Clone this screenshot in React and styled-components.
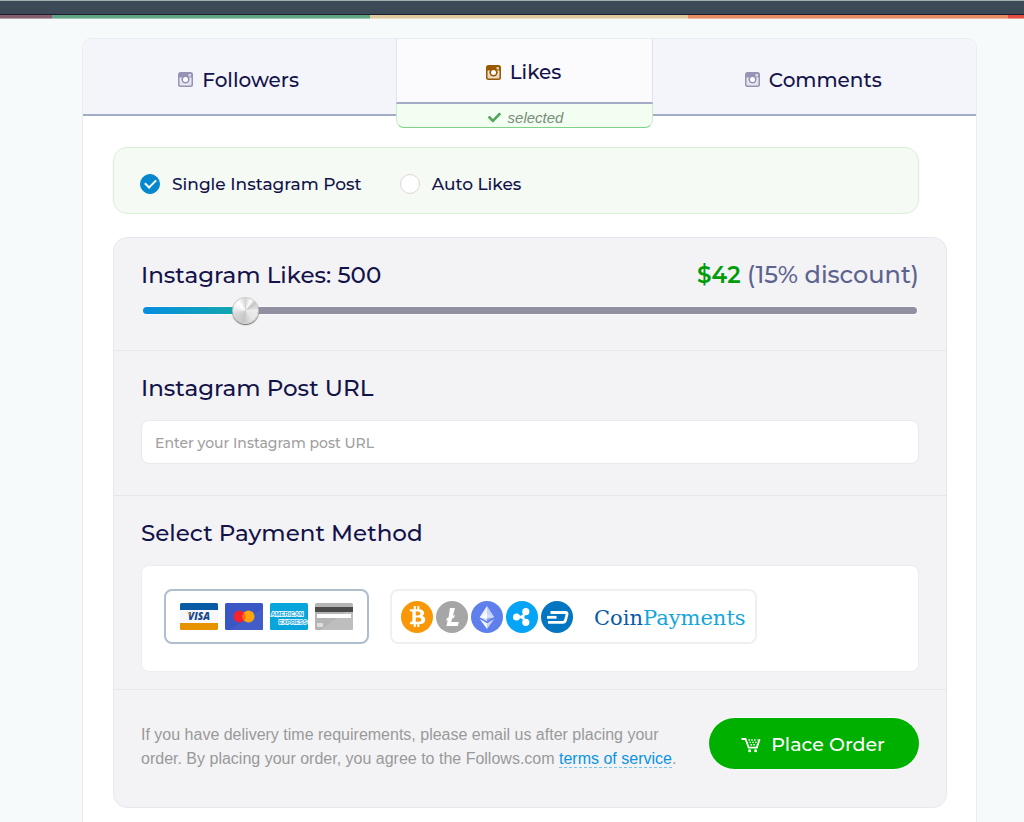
import React, { useState } from "react";
import styled, { createGlobalStyle } from "styled-components";
import { FaBtc, FaCheck } from "react-icons/fa";

const GlobalStyle = createGlobalStyle`
  * {
    box-sizing: border-box;
  }
  body {
    margin: 0;
    background: #f6fafb;
    color: #13134a;
    font-family: Montserrat, Inter, sans-serif;
    font-weight: 500;
  }
  button, input {
    font-family: inherit;
  }
`;

const Page = styled.div`
  display: flex;
  flex-direction: column;
  min-height: 100vh;
`;

const TopBar = styled.header`
  height: 15px;
  background: #3c4956;
  border-top: 1px solid #a3b0b0;
  border-bottom: 1px solid #1d1c2c;
`;

const Stripe = styled.div`
  display: grid;
  grid-template-columns: 52fr 318fr 318fr 320fr 16fr;
  height: 4px;
`;

const Band = styled.span`
  background: ${(props) => props.$color};
  border-bottom: 1px solid rgba(255, 255, 255, 0.4);
`;

const Card = styled.main`
  flex: 1;
  margin: 19px 47px 0 82px;
  border: 1px solid #e8edf2;
  border-bottom: 0;
  border-radius: 10px 10px 0 0;
  background: #fff;
`;

const Tabs = styled.nav`
  display: grid;
  grid-template-columns: 313fr 256fr 323fr;
  align-items: start;
`;

const TabCell = styled.div`
  display: flex;
  flex-direction: column;
`;

const Tab = styled.button`
  display: flex;
  align-items: center;
  justify-content: center;
  gap: 9px;
  height: ${(props) => (props.$active ? "65px" : "77px")};
  padding: ${(props) => (props.$active ? "3px 2px 0 0" : "6px 2px 0 0")};
  border: solid #dfe3ec;
  border-width: ${(props) => (props.$active ? "0 1px" : "0")};
  border-bottom: 2px solid #a3abc6;
  border-radius: ${(props) => props.$radius || "0"};
  background: ${(props) => (props.$active ? "#fbfbfd" : "#f4f5fa")};
  color: #13134a;
  font-size: 20px;
  font-weight: 500;
  cursor: pointer;

  svg {
    color: ${(props) => (props.$active ? "#985900" : "#9594b4")};
  }
`;

const Selected = styled.div`
  display: flex;
  align-items: center;
  justify-content: center;
  gap: 7px;
  height: 24px;
  padding: 3px 0 0 2px;
  border: 1px solid #cdeccd;
  border-top: 0;
  border-bottom-color: #7fd386;
  border-radius: 0 0 8px 8px;
  background: #f2fef2;
  color: #788c78;
  font: italic 15px "Liberation Sans", Arial, sans-serif;

  svg {
    color: #56a55c;
  }
`;

const Content = styled.div`
  padding: 19px 29px 14px 30px;
`;

const Modes = styled.div`
  display: flex;
  align-items: center;
  gap: 38px;
  height: 67px;
  margin: 0 28px 23px 0;
  padding: 6px 26px 0;
  border: 1px solid #d8f0d3;
  border-radius: 14px;
  background: #f5faf4;
`;

const Mode = styled.label`
  display: flex;
  align-items: center;
  gap: 12px;
  font-size: 17px;
  cursor: pointer;
`;

const Radio = styled.input`
  appearance: none;
  display: grid;
  place-items: center;
  width: 20px;
  height: 20px;
  margin: 0;
  border: 1px solid #ddd8d4;
  border-radius: 50%;
  background: #fff;

  &:checked {
    border-color: #0487cc;
    background: #0487cc;
  }
  &:checked::after {
    content: "";
    width: 9px;
    height: 5px;
    margin-bottom: 3px;
    border: solid #fff;
    border-width: 0 0 2px 2px;
    transform: rotate(-45deg);
  }
`;

const Panel = styled.form`
  border: 1px solid #e7e7ef;
  border-radius: 14px;
  background: #f3f3f6;
`;

const Section = styled.section`
  padding: 22px 27px ${(props) => props.$bottom};
  border-bottom: 1px solid #e6e6ee;
`;

const Row = styled.div`
  display: flex;
  justify-content: space-between;
`;

const Heading = styled.h2`
  margin: 0;
  font-size: 23px;
  font-weight: 500;
  line-height: 30px;
`;

const Price = styled.div`
  color: #5c638f;
  font-size: 24px;
  line-height: 30px;

  strong {
    color: #009c0a;
    font-size: 23px;
    font-weight: 600;
  }
`;

const Slider = styled.input`
  appearance: none;
  display: block;
  width: calc(100% - 4px);
  height: 28px;
  margin: 6px 2px 0;
  background: transparent;
  cursor: pointer;

  &::-webkit-slider-runnable-track {
    height: 7px;
    border-radius: 4px;
    background:
      linear-gradient(90deg, #078de0, #14a9a9) 0 0 / var(--fill) 100% no-repeat,
      #9090a2;
    box-shadow: 0 0 0 1px #fafafc;
  }
  &::-webkit-slider-thumb {
    appearance: none;
    width: 27px;
    height: 27px;
    margin-top: -10px;
    border-radius: 50%;
    border: 1px solid #c9c9c9;
    background: conic-gradient(#d4d4d4, #fff 30deg, #c4c4c4 50deg, #ececec 90deg, #e6e6e6 140deg, #c6c6c6 190deg, #d8d8d8 250deg, #f4f4f4 290deg, #fff 320deg, #d4d4d4);
    box-shadow: 0 1px 1px #666;
  }
`;

const UrlInput = styled.input`
  display: block;
  width: 100%;
  height: 44px;
  margin-top: 17px;
  padding: 1px 13px 0;
  border: 1px solid #e8e8ed;
  border-radius: 8px;
  background: #fff;
  color: #13134a;
  font-size: 14px;
  font-weight: 500;

  &::placeholder {
    color: #a0a0a0;
    opacity: 1;
  }
`;

const Methods = styled.div`
  display: flex;
  flex-wrap: wrap;
  gap: 21px;
  margin-top: 17px;
  padding: 23px 22px 27px;
  border: 1px solid #ececf1;
  border-radius: 8px;
  background: #fff;
`;

const Method = styled.label`
  display: flex;
  align-items: center;
  gap: ${(props) => props.$gap};
  height: 55px;
  padding: 0 ${(props) => props.$pad};
  border: 2px solid #f0f0f0;
  border-radius: 8px;
  cursor: pointer;

  &:has(input:checked) {
    border-color: #afbdcf;
  }
  input {
    position: absolute;
    opacity: 0;
    margin: 0;
  }
`;

const Coin = styled.span`
  display: grid;
  place-items: center;
  width: 32px;
  height: 32px;
  border-radius: 50%;
  background: ${(props) => props.$color};
  color: #fff;
`;

const CoinBrand = styled.span`
  margin-left: 18px;
  padding-top: 2px;
  color: #15a5dc;
  font: 21px "DejaVu Serif", serif;

  b {
    color: #0a5ca8;
    font-weight: 400;
  }
`;

const Footer = styled.footer`
  display: flex;
  align-items: flex-start;
  justify-content: space-between;
  gap: 24px;
  padding: 28px 27px 36px;
`;

const Note = styled.p`
  max-width: 540px;
  margin: 5px 0 0;
  color: #999;
  font: 16px/24px "Liberation Sans", Arial, sans-serif;

  a {
    border-bottom: 1px dashed #7cc4f0;
    color: #0a93e0;
    text-decoration: none;
  }
`;

const OrderButton = styled.button`
  display: flex;
  flex: none;
  align-items: center;
  justify-content: center;
  gap: 10px;
  width: 210px;
  height: 51px;
  padding: 2px 2px 0 0;
  border: 0;
  border-radius: 26px;
  background: #00b000;
  box-shadow: 0 0 0 1px #f9fbf9;
  color: #fff;
  font-size: 19px;
  font-weight: 500;
  cursor: pointer;
`;

const CameraIcon = () => (
  <svg width="15" height="15" viewBox="0 0 15 15" aria-hidden="true">
    <rect width="15" height="15" rx="2.5" fill="currentColor" />
    <path d="M1.500 5.500h2.200a4 4 0 0 0 7.600 0h2.200v7a1 1 0 0 1-1 1h-10a1 1 0 0 1-1-1z" fill="#fff" fillOpacity="0.75" />
    <circle cx="7.500" cy="7.500" r="4.600" fill="currentColor" />
    <circle cx="7.500" cy="7.500" r="2.500" fill="#fff" />
    <path d="M3.200 5.500a4.700 4.700 0 1 0 8.600 0" fill="none" stroke="#fff" strokeOpacity="0.8" strokeWidth="1" />
    <rect x="10.500" y="2" width="2.500" height="2.500" rx="0.500" fill="#fff" fillOpacity="0.7" />
  </svg>
);

const CartIcon = () => (
  <svg width="20" height="16" viewBox="0 0 20 16" fill="none" stroke="#fff" aria-hidden="true">
    <path d="M0.5 2h4l3.2 8.6h8.2L18.6 2" strokeWidth="1.8" />
    <path d="M7.500 3h9M8.500 5.400h8M9.500 7.800h6" strokeWidth="1.4" strokeDasharray="1.4 1.4" />
    <circle cx="8.6" cy="13.8" r="1.5" fill="#fff" stroke="none" />
    <circle cx="14.6" cy="13.8" r="1.5" fill="#fff" stroke="none" />
  </svg>
);

const VisaCard = () => (
  <svg width="38" height="27" viewBox="0 0 38 27" aria-hidden="true">
    <rect width="38" height="27" rx="1.5" fill="#f7f7fa" />
    <path d="M0 7V1.5A1.5 1.5 0 0 1 1.5 0h35A1.5 1.5 0 0 1 38 1.5V7z" fill="#075ba5" />
    <path d="M0 20h38v5.5a1.5 1.5 0 0 1-1.5 1.5h-35A1.5 1.5 0 0 1 0 25.5z" fill="#e79300" />
    <text x="19" y="17" textAnchor="middle" fontFamily="Open Sans, sans-serif" fontSize="10" fontWeight="800" fontStyle="italic" fill="#17498d">VISA</text>
    <path d="M7 9.800h2.800l1 3.400c-.8-1.600-2-2.600-3.800-3.400z" fill="#e79300" />
  </svg>
);

const MasterCard = () => (
  <svg width="38" height="27" viewBox="0 0 38 27" aria-hidden="true">
    <rect width="38" height="27" rx="1.5" fill="#3a55c4" />
    <path d="M38 5v20.500a1.500 1.500 0 0 1-1.500 1.500H4z" fill="#435dc8" />
    <circle cx="14.500" cy="13.500" r="6" fill="#f6222f" />
    <circle cx="23.500" cy="13.500" r="6" fill="#fda50f" />
    <path d="M19 9.500a6 6 0 0 1 0 8a6 6 0 0 1 0-8z" fill="#fb6a17" />
  </svg>
);

const AmexCard = () => (
  <svg width="38" height="27" viewBox="0 0 38 27" aria-hidden="true">
    <rect width="38" height="27" rx="1.5" fill="#08a5dd" />
    <g fontFamily="Liberation Sans, sans-serif" fontWeight="700" fill="#08a5dd" stroke="#fff" strokeWidth="1.6" paintOrder="stroke">
      <text x="1" y="12.500" fontSize="6">AMERICAN</text>
      <text x="37" y="20.500" fontSize="6" textAnchor="end">EXPRESS</text>
    </g>
  </svg>
);

const PlainCard = () => (
  <svg width="38" height="27" viewBox="0 0 38 27" aria-hidden="true">
    <rect width="38" height="27" rx="1.5" fill="#b5b5b5" />
    <path d="M38 4v21.500a1.500 1.500 0 0 1-1.500 1.500H5z" fill="#bebebe" />
    <path d="M0 4h38v5H0z" fill="#4a4a4a" />
    <path d="M2 11h34v4H2z" fill="#fff" />
    <rect x="2" y="20" width="6" height="4" rx="1" fill="#dedede" />
  </svg>
);

const LitecoinMark = () => (
  <svg width="32" height="32" viewBox="0 0 32 32" fill="#fff" aria-hidden="true">
    <path d="M14 7h5l-2.100 7.700 2-.9-.8 2.900-2 .9-.9 3.300h7.600l-1 4H10.300l1.500-5.600-1.700.8.800-2.900 1.700-.8z" />
  </svg>
);

const EthereumMark = () => (
  <svg width="32" height="32" viewBox="0 0 32 32" aria-hidden="true">
    <path d="M16 5v12.800l-7.300-1.600z" fill="#fff" fillOpacity="0.9" />
    <path d="M16 5v12.800l7.300-1.600z" fill="#fff" fillOpacity="0.65" />
    <path d="M8.700 16.200L16 12.800v7.600z" fill="#fff" fillOpacity="0.7" />
    <path d="M23.300 16.200L16 12.800v7.600z" fill="#fff" fillOpacity="0.2" />
    <path d="M8.700 18L16 22.200V28z" fill="#fff" fillOpacity="0.95" />
    <path d="M23.300 18L16 22.200V28z" fill="#fff" fillOpacity="0.65" />
  </svg>
);

const RippleMark = () => (
  <svg width="32" height="32" viewBox="0 0 32 32" fill="#fff" aria-hidden="true">
    <path d="M11 16h5.500M16.500 16l3-5M16.500 16l3 5" stroke="#fff" strokeWidth="2.400" />
    <circle cx="10.500" cy="16" r="3.500" />
    <circle cx="16.500" cy="16" r="2" />
    <circle cx="19.800" cy="10.700" r="3.600" />
    <circle cx="19.800" cy="21.300" r="3.600" />
  </svg>
);

const DashMark = () => (
  <svg width="32" height="32" viewBox="0 0 32 32" fill="none" stroke="#fff" strokeWidth="2.800" aria-hidden="true">
    <path d="M9.500 11.500h15.200q1.800 0 1.300 1.800l-1.300 5.200q-.6 2.800-2.700 2.800H7" />
    <path d="M6 16.300h9.500" />
  </svg>
);

const MAX_LIKES = 4200;

const App = () => {
  const [tab, setTab] = useState("Likes");
  const [likes, setLikes] = useState(500);

  return (
    <Page>
      <GlobalStyle />
      <TopBar />
      <Stripe>
        <Band $color="#875d70" />
        <Band $color="#62a584" />
        <Band $color="#dfcaa0" />
        <Band $color="#e78d5f" />
        <Band $color="#e34f43" />
      </Stripe>
      <Card>
        <Tabs>
          {["Followers", "Likes", "Comments"].map((name, i) => (
            <TabCell key={name}>
              <Tab
                type="button"
                $active={tab === name}
                $radius={["9px 0 0 0", "0", "0 9px 0 0"][i]}
                onClick={() => setTab(name)}
              >
                <CameraIcon />
                {name}
              </Tab>
              {tab === name && (
                <Selected>
                  <FaCheck size={13} />
                  selected
                </Selected>
              )}
            </TabCell>
          ))}
        </Tabs>
        <Content>
          <Modes>
            <Mode>
              <Radio type="radio" name="mode" defaultChecked />
              Single Instagram Post
            </Mode>
            <Mode>
              <Radio type="radio" name="mode" />
              Auto Likes
            </Mode>
          </Modes>
          <Panel onSubmit={(e) => e.preventDefault()}>
            <Section $bottom="26px">
              <Row>
                <Heading as="label" htmlFor="likes">Instagram Likes: {likes}</Heading>
                <Price><strong>$42</strong> (15% discount)</Price>
              </Row>
              <Slider
                id="likes"
                type="range"
                min="0"
                max={MAX_LIKES}
                step="50"
                value={likes}
                onChange={(e) => setLikes(Number(e.target.value))}
                style={{ "--fill": `${(likes / MAX_LIKES) * 100 + 1}%` }}
              />
            </Section>
            <Section $bottom="31px">
              <Heading as="label" htmlFor="url">Instagram Post URL</Heading>
              <UrlInput id="url" type="text" placeholder="Enter your Instagram post URL" />
            </Section>
            <Section $bottom="17px">
              <Heading>Select Payment Method</Heading>
              <Methods>
                <Method $gap="7px" $pad="14px">
                  <input type="radio" name="method" aria-label="Credit card" defaultChecked />
                  <VisaCard />
                  <MasterCard />
                  <AmexCard />
                  <PlainCard />
                </Method>
                <Method $gap="3px" $pad="9px">
                  <input type="radio" name="method" />
                  <Coin $color="#f99707"><FaBtc size={21} /></Coin>
                  <Coin $color="#a6a6a6"><LitecoinMark /></Coin>
                  <Coin $color="#5f7fec"><EthereumMark /></Coin>
                  <Coin $color="#05a4f7"><RippleMark /></Coin>
                  <Coin $color="#0475c0"><DashMark /></Coin>
                  <CoinBrand><b>Coin</b>Payments</CoinBrand>
                </Method>
              </Methods>
            </Section>
            <Footer>
              <Note>
                If you have delivery time requirements, please email us after placing your
                order. By placing your order, you agree to the Follows.com <a href="#terms">terms of service</a>.
              </Note>
              <OrderButton type="submit">
                <CartIcon />
                Place Order
              </OrderButton>
            </Footer>
          </Panel>
        </Content>
      </Card>
    </Page>
  );
};

export default App;
